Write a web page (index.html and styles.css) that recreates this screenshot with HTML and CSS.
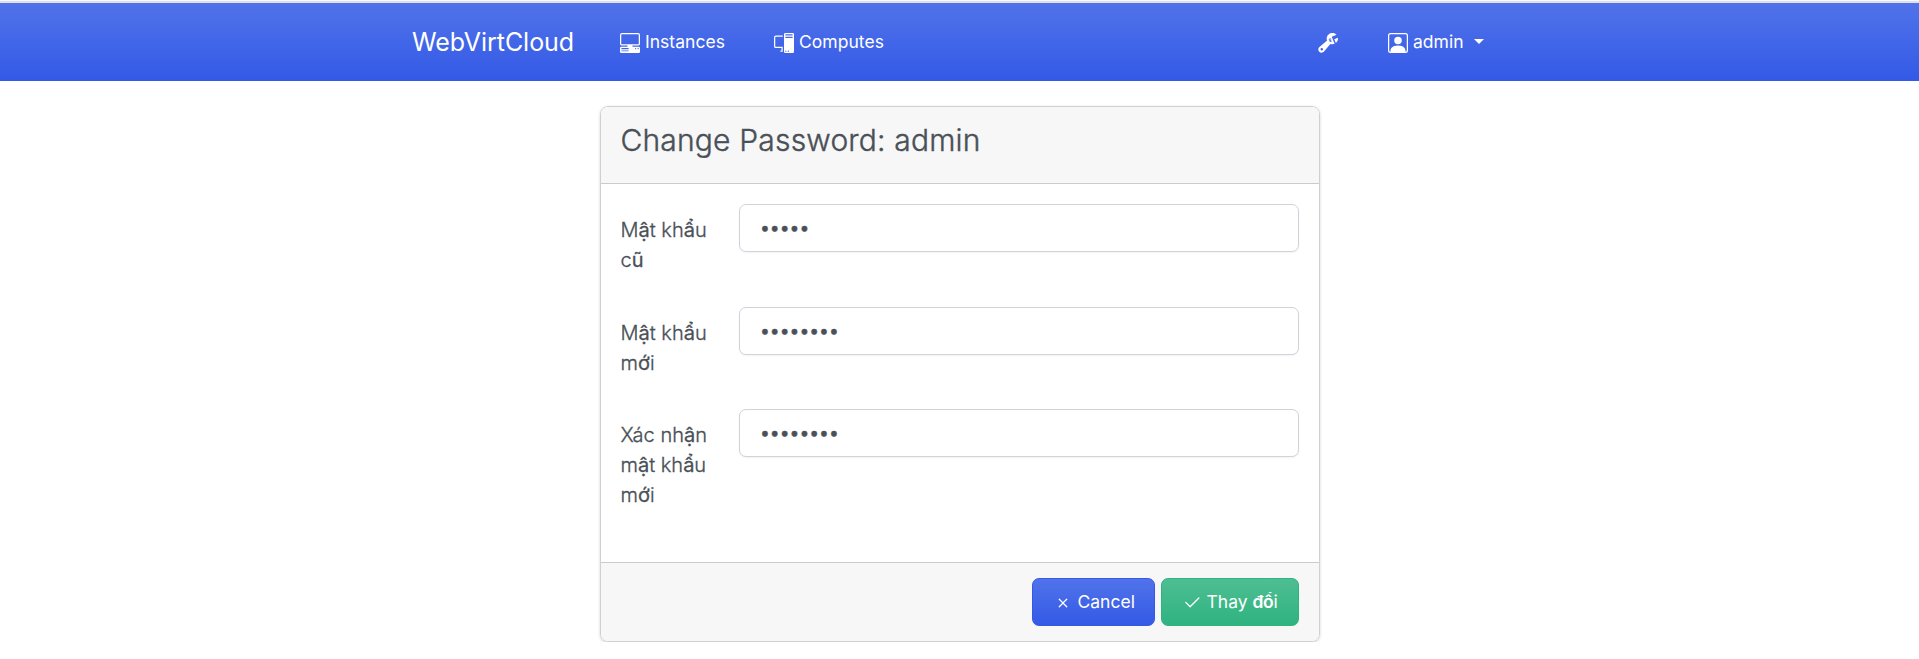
FILE: index.html
```html
<!DOCTYPE html>
<html lang="vi">
<head>
<meta charset="utf-8">
<title>WebVirtCloud</title>
<link rel="stylesheet" href="styles.css">
</head>
<body>
<nav class="navbar">
  <div class="container">
    <a class="brand">WebVirtCloud</a>
    <a class="nav-link instances"><svg class="icon" viewBox="0 0 16 16"><path d="M1.5 0A1.5 1.5 0 0 0 0 1.5v7A1.5 1.5 0 0 0 1.5 10H6v1H1a1 1 0 0 0-1 1v3a1 1 0 0 0 1 1h14a1 1 0 0 0 1-1v-3a1 1 0 0 0-1-1h-5v-1h4.5A1.5 1.5 0 0 0 16 8.5v-7A1.5 1.5 0 0 0 14.5 0zm0 1h13a.5.5 0 0 1 .5.5v7a.5.5 0 0 1-.5.5h-13a.5.5 0 0 1-.5-.5v-7a.5.5 0 0 1 .5-.5M12 12.5a.5.5 0 1 1 1 0 .5.5 0 0 1-1 0m2 0a.5.5 0 1 1 1 0 .5.5 0 0 1-1 0M1.5 12h5a.5.5 0 0 1 0 1h-5a.5.5 0 0 1 0-1M1 14.25a.25.25 0 0 1 .25-.25h5.5a.25.25 0 1 1 0 .5h-5.5a.25.25 0 0 1-.25-.25"/></svg><span>Instances</span></a>
    <a class="nav-link computes"><svg class="icon" viewBox="0 0 16 16"><path d="M8 1a1 1 0 0 1 1-1h6a1 1 0 0 1 1 1v14a1 1 0 0 1-1 1H9a1 1 0 0 1-1-1zm1 13.5a.5.5 0 1 0 1 0 .5.5 0 0 0-1 0m2 0a.5.5 0 1 0 1 0 .5.5 0 0 0-1 0M9.5 1a.5.5 0 0 0 0 1h5a.5.5 0 0 0 0-1zM9 3.5a.5.5 0 0 0 .5.5h5a.5.5 0 0 0 0-1h-5a.5.5 0 0 0-.5.5M1.5 2A1.5 1.5 0 0 0 0 3.5v7A1.5 1.5 0 0 0 1.5 12H6v2h-.5a.5.5 0 0 0 0 1H7v-4H1.5a.5.5 0 0 1-.5-.5v-7a.5.5 0 0 1 .5-.5H7V2z"/></svg><span>Computes</span></a>
    <a class="nav-link settings"><svg class="icon" viewBox="0 0 16 16"><path d="M16 4.5a4.492 4.492 0 0 1-1.703 3.526L13 5l2.959-1.11c.027.2.041.403.041.61"/><path d="M11.5 9c.653 0 1.273-.139 1.833-.39L12 5.5 11 3l3.826-1.53A4.5 4.5 0 0 0 7.29 6.092l-6.116 5.096a2.583 2.583 0 1 0 3.638 3.638L9.908 8.71A4.5 4.5 0 0 0 11.5 9m-1.292-4.361-.596.893.809-.27a.25.25 0 0 1 .287.377l-.596.893.809-.27.158.475-1.5.5a.25.25 0 0 1-.287-.376l.596-.893-.809.27a.25.25 0 0 1-.287-.377l.596-.893-.809.27-.158-.475 1.5-.5a.25.25 0 0 1 .287.376M3 14a1 1 0 1 1 0-2 1 1 0 0 1 0 2"/></svg></a>
    <a class="nav-link user"><svg class="icon" viewBox="0 0 16 16"><path d="M11 6a3 3 0 1 1-6 0 3 3 0 0 1 6 0"/><path d="M2 0a2 2 0 0 0-2 2v12a2 2 0 0 0 2 2h12a2 2 0 0 0 2-2V2a2 2 0 0 0-2-2zm12 1a1 1 0 0 1 1 1v12a1 1 0 0 1-1 1v-1c0-1-1-4-6-4s-6 3-6 4v1a1 1 0 0 1-1-1V2a1 1 0 0 1 1-1z"/></svg><span>admin</span><i class="caret"></i></a>
  </div>
</nav>
<main class="card">
  <header class="card-header"><h3 class="title">Change Password: admin</h3></header>
  <form class="card-body">
    <div class="row">
      <label class="label">M<b>ậ</b>t kh<b>ẩ</b>u<br>c<b>ũ</b></label>
      <input class="input" type="password" value="admin">
    </div>
    <div class="row">
      <label class="label">M<b>ậ</b>t kh<b>ẩ</b>u<br>m<b>ớ</b>i</label>
      <input class="input" type="password" value="password">
    </div>
    <div class="row">
      <label class="label">Xác nh<b>ậ</b>n<br>m<b>ậ</b>t kh<b>ẩ</b>u<br>m<b>ớ</b>i</label>
      <input class="input" type="password" value="password">
    </div>
  </form>
  <footer class="card-footer">
    <a class="btn btn-primary"><svg class="icon" viewBox="0 0 16 16"><path d="M4.646 4.646a.5.5 0 0 1 .708 0L8 7.293l2.646-2.647a.5.5 0 0 1 .708.708L8.707 8l2.647 2.646a.5.5 0 0 1-.708.708L8 8.707l-2.646 2.647a.5.5 0 0 1-.708-.708L7.293 8 4.646 5.354a.5.5 0 0 1 0-.708"/></svg><span>Cancel</span></a>
    <a class="btn btn-success"><svg class="icon" viewBox="0 0 16 16"><path d="M13.854 3.646a.5.5 0 0 1 0 .708l-7 7a.5.5 0 0 1-.708 0l-3.5-3.5a.5.5 0 1 1 .708-.708L6.5 10.293l6.646-6.647a.5.5 0 0 1 .708 0"/></svg><span>Thay <b>đổ</b>i</span></a>
  </footer>
</main>
</body>
</html>
```
FILE: styles.css
```css
* { box-sizing: border-box; }
body {
  margin: 0;
  background: #fff;
  color: #495057;
  font: 300 20px/30px Inter, sans-serif;
  border-top: 1px solid #f8f8f8;
  overflow: hidden;
}
b { font-weight: 500; }
.navbar {
  height: 80px;
  border-top: 2px solid #dee2e6;
  background: linear-gradient(180deg, #5073ea, #3459e6) padding-box;
  color: #fff;
}
.container {
  display: flex;
  align-items: center;
  height: 78px;
  width: 1095px;
  margin: 0 auto;
}
.brand { font-size: 25px; font-weight: 400; width: 208px; white-space: nowrap; letter-spacing: -.05px; }
.nav-link {
  display: flex;
  align-items: center;
  gap: 5px;
  font-size: 17.5px;
  font-weight: 400;
  white-space: nowrap;
}
.nav-link span { letter-spacing: .03px; }
.icon { width: 20px; height: 20px; fill: currentColor; flex: none; position: relative; top: 1px; }
.instances { width: 154px; }
.settings { margin-left: auto; width: 70px; }
.user { width: 119px; }
.caret {
  margin-left: 5px;
  margin-top: -2px;
  border: 5px solid transparent;
  border-top-color: #fff;
  border-bottom: 0;
}
.card {
  width: 720px;
  height: 536px;
  margin: 25px auto 0;
  border: 1px solid #ced0d2;
  border-radius: 8px;
  box-shadow: 0 1px 3px rgba(0, 0, 0, .18);
  display: flex;
  flex-direction: column;
  overflow: hidden;
}
.card-header {
  height: 77px;
  padding: 15px 20px;
  background: #f7f7f7;
  border-bottom: 1px solid #c9cbcd;
}
.title {
  margin: 0;
  font-size: 30px;
  line-height: 36px;
  font-weight: 300;
  letter-spacing: .18px;
  -webkit-text-stroke: .4px currentColor;
}
.card-body { flex: 1; padding: 20px 20px 0; }
.row {
  display: grid;
  grid-template-columns: 118px 560px;
  min-height: 102.5px;
}
.label {
  padding-top: 11px;
  white-space: nowrap;
  -webkit-text-stroke: .3px currentColor;
}
.label b { font-weight: 400; }
.input {
  height: 48px;
  padding: 0 20px 1px 20.5px;
  border: 1px solid #ced4da;
  border-radius: 7px;
  background: #fff;
  color: #495057;
  font: 400 17.5px/26px Inter, sans-serif;
  box-shadow: 0 1px 2px rgba(0, 0, 0, .05);
  outline: 0;
  -webkit-text-stroke: .4px currentColor;
}
.card-footer {
  height: 79px;
  padding: 15px 20px 0;
  background: #f7f7f7;
  border-top: 1px solid #c9cbcd;
  display: flex;
  justify-content: flex-end;
  gap: 6px;
}
.btn {
  display: flex;
  align-items: center;
  gap: 5px;
  height: 48px;
  padding: 0 0 0 20px;
  border: 1px solid;
  border-radius: 7px;
  color: #fff;
  font-size: 17.5px;
  font-weight: 400;
  white-space: nowrap;
}
.btn b { font-weight: 600; letter-spacing: -.3px; }
.btn-primary { width: 123px; border-color: #3459e6; background: linear-gradient(#5073ea, #3459e6); }
.btn-success { width: 138px; border-color: #2fb380; background: linear-gradient(#4ebe93, #2fb380); }
```
